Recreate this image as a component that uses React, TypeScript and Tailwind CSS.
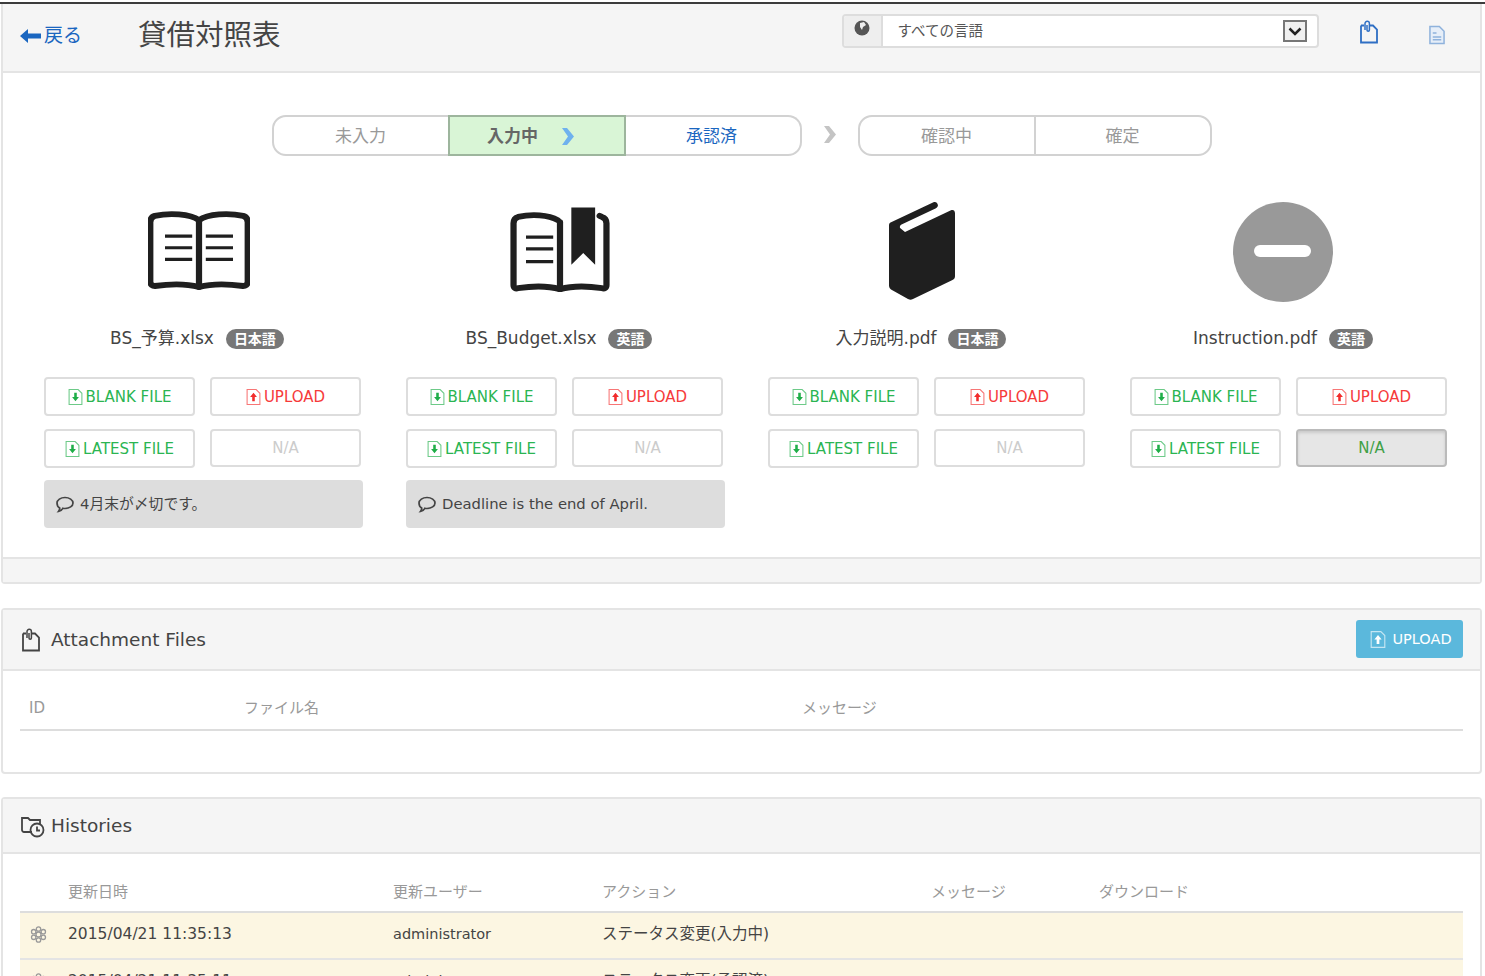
import type { ReactNode } from "react"

const FILES = [
  { name: "BS_予算.xlsx", lang: "日本語", icon: "open", message: "4月末が〆切です。" },
  { name: "BS_Budget.xlsx", lang: "英語", icon: "bookmark", message: "Deadline is the end of April." },
  { name: "入力説明.pdf", lang: "日本語", icon: "closed", message: "" },
  { name: "Instruction.pdf", lang: "英語", icon: "none", message: "", naActive: true },
]

function OpenBook() {
  return (
    <svg className="ml-[4px]" width="102" height="102" viewBox="6 3 90 96" preserveAspectRatio="none" fill="none" stroke="#1f1f1f" strokeWidth="5.500" strokeLinecap="round" strokeLinejoin="round">
      <path d="M51 21c-8-6-26-7-39-4-3 1-4 3-4 6v56c0 3 2 4 4 4 13-2 29-2 39 1 10-3 26-3 39-1 2 0 4-1 4-4V23c0-3-1-5-4-6-13-3-31-2-39 4z" />
      <path d="M51 21v63" />
      <path strokeWidth="3" d="M21 36h24M21 47h24M21 58h24M57 36h24M57 47h24M57 58h24" strokeLinecap="butt" />
    </svg>
  )
}

function BookmarkBook() {
  return (
    <svg className="ml-[2px]" width="102" height="102" viewBox="6 3 90 96" preserveAspectRatio="none" fill="none" stroke="#1f1f1f" strokeWidth="5.500" strokeLinecap="round" strokeLinejoin="round">
      <path d="M49 21c-8-5-23-6-35-3-3 1-4 3-4 6v58c0 3 2 4 4 3 13-2 27-2 37 1 10-3 24-3 37-1 2 1 4 0 4-3V24c0-3-1-5-4-6l-2-1" />
      <path d="M51 23v63" />
      <path strokeWidth="3" strokeLinecap="butt" d="M21 37h24M21 48h24M21 60h24" />
      <path fill="#1f1f1f" stroke="none" d="M61 9h21v54l-10.500-11L61 63z" />
    </svg>
  )
}

function ClosedBook() {
  return (
    <svg width="102" height="102" viewBox="0 0 102 99" preserveAspectRatio="none" fill="#1f1f1f">
      <path d="M20 21L64 1c3-1 6 4 2 6L31 23c-1 1-2 3 0 4l4 3 46-21c2-1 4 0 4 3v61c0 2-1 3-3 4l-39 18c-2 1-3 1-5 0l-17-9c-1-1-2-2-2-4V24c0-1 0-2 1-3z" />
    </svg>
  )
}

function NoneCircle() {
  return (
    <svg width="102" height="102" viewBox="0 0 102 102">
      <circle cx="51" cy="51" r="50" fill="#999999" />
      <rect x="22" y="44" width="57" height="12" rx="6" fill="#ffffff" />
    </svg>
  )
}

function fileIcon(kind: string) {
  if (kind === "open") return <OpenBook />
  if (kind === "bookmark") return <BookmarkBook />
  if (kind === "closed") return <ClosedBook />
  return <NoneCircle />
}

function FileArrow({ up, color, size = 16 }: { up?: boolean; color: string; size?: number }) {
  return (
    <svg width={size - 1} height={size} viewBox="0 0 14 15" fill="none" className="shrink-0">
      <path d="M1 .5h8.500L13 4v10.500H1z" stroke={color} strokeOpacity="0.65" />
      {up ? (
        <path d="M7 3.500l3.200 4H8.200v4H5.800v-4H3.800z" fill={color} />
      ) : (
        <path d="M7 11.500l3.200-4H8.200v-4H5.800v4H3.800z" fill={color} />
      )}
    </svg>
  )
}

function ClipFile({ color, width = 20, height = 24 }: { color: string; width?: number; height?: number }) {
  return (
    <svg width={width} height={height} viewBox="0 0 20 24" fill="none" stroke={color} strokeWidth="1.800">
      <path d="M2 5.500h3M11 5.500h3l4 4v13H2v-17" />
      <path d="M6 10V3.500a2.200 2.200 0 0 1 4.400 0V10a1.200 1.200 0 0 1-2.400 0V5" strokeWidth="1.500" />
    </svg>
  )
}

function FileButton({ children, className = "" }: { children: ReactNode; className?: string }) {
  return (
    <div className={`flex items-center justify-center gap-[3px] rounded-[4px] border-2 text-[15px] ${className}`}>
      {children}
    </div>
  )
}

function Step({ label, className = "", children }: { label: string; className?: string; children?: ReactNode }) {
  return (
    <div className={`flex w-[178px] items-center justify-center border-2 pt-[2px] text-[17px] ${className}`}>
      {label}
      {children}
    </div>
  )
}

function Chevron({ color, className = "" }: { color: string; className?: string }) {
  return (
    <svg width="14" height="17" viewBox="0 0 14 17" className={className}>
      <path d="M1 0h5l7 8.500L6 17H1l6-8.500z" fill={color} />
    </svg>
  )
}

function SectionHead({ icon, title, height, children }: { icon: ReactNode; title: string; height: string; children?: ReactNode }) {
  return (
    <div className={`flex items-center justify-between border-b-2 border-[#e4e4e4] bg-[#f5f5f5] pl-[18px] pr-[17px] ${height}`}>
      <div className="flex items-center text-[18.500px] text-[#444444]">
        <div className="w-[30px]">{icon}</div>
        <span className="pt-[1px]">{title}</span>
      </div>
      {children}
    </div>
  )
}

const HISTORY = [
  { at: "2015/04/21 11:35:13", user: "administrator", action: "ステータス変更(入力中)" },
  { at: "2015/04/21 11:35:11", user: "administrator", action: "ステータス変更(承認済)" },
]

export default function App() {
  return (
    <div
      className="h-[976px] w-[1485px] overflow-hidden bg-white text-[#333333]"
      style={{ fontFamily: '"DejaVu Sans", "Noto Sans CJK JP", sans-serif' }}
    >
      <div className="mt-[2px] h-[2px] bg-[#3c3c3c]" />

      <div className="ml-[1px] w-[1481px] rounded-b-[4px] border-x-2 border-b-2 border-[#e4e4e4]">
        <div className="flex h-[69px] items-center border-b-2 border-[#e4e4e4] bg-[#f5f5f5] pb-[4px]">
          <div className="ml-[17px] flex w-[118px] items-center gap-[3px] text-[19px] text-[#1a66c0]">
            <svg width="21" height="14" viewBox="0 0 21 14">
              <path d="M0 7l8-7v4.500h13v5H8V14z" fill="#1a66c0" />
            </svg>
            戻る
          </div>
          <div className="pt-[1px] text-[28.500px] text-[#444444]">貸借対照表</div>
          <div className="ml-[561px] mt-[10px] flex h-[34px] w-[477px] self-start overflow-hidden rounded-[4px] border-2 border-[#dddddd] bg-white">
            <div className="flex w-[39px] justify-center border-r-2 border-[#dddddd] bg-[#eeeeee] pt-[4px]">
              <svg width="16" height="16" viewBox="0 0 16 16">
                <circle cx="8" cy="8" r="7.500" fill="#555555" />
                <path d="M6 3l4-1 2 3-3 2-1 3-2-3z" fill="#eeeeee" />
              </svg>
            </div>
            <div className="flex flex-1 items-center justify-between pl-[15px] pr-[10px] text-[14.500px] text-[#555555]">
              <span className="pt-[1px]">すべての言語</span>
              <div className="flex h-[22px] w-[24px] items-center justify-center border-2 border-[#777777] bg-[#f0f0f0]">
                <svg width="14" height="9" viewBox="0 0 14 9" fill="none" stroke="#222222" strokeWidth="2.500">
                  <path d="M1.500 1.500L7 7l5.500-5.500" />
                </svg>
              </div>
            </div>
          </div>
          <div className="-mt-[8px] ml-[40px]">
            <ClipFile color="#2f6fc4" />
          </div>
          <div className="-mt-[2px] ml-[50px]">
            <svg width="16" height="20" viewBox="0 0 17 20" fill="#e6eef8" stroke="#8fb2dc" strokeWidth="1.600">
              <path d="M1 1h10l5 5v13H1z" />
              <path d="M4 8h4M4 12h9M4 15h9" />
            </svg>
          </div>
        </div>

        <div className="h-[484px] pl-[41px] pt-[42px]">
          <div className="flex h-[41px] items-stretch justify-center pr-[41px]">
            <div className="flex">
              <Step label="未入力" className="rounded-l-[14px] border-[#d2d2d2] text-[#999999]" />
              <Step label="入力中" className="relative -mx-[2px] border-[#9db59d] bg-[#d9f5d6] pr-[48px] font-semibold text-[#666666]">
                <Chevron color="#6fb1ee" className="absolute left-[111px] top-[11px]" />
              </Step>
              <Step label="承認済" className="rounded-r-[14px] border-l-0 border-[#d2d2d2] text-[#1a66c0]" />
            </div>
            <div className="flex w-[56px] items-center justify-center pb-[2px]">
              <Chevron color="#c4c4c4" />
            </div>
            <div className="flex">
              <Step label="確認中" className="rounded-l-[14px] border-[#d2d2d2] text-[#999999]" />
              <Step label="確定" className="-ml-[2px] rounded-r-[14px] border-[#d2d2d2] text-[#999999]" />
            </div>
          </div>

          <div className="mt-[45px] grid grid-cols-[repeat(4,318px)] gap-x-[44px]">
            {FILES.map(f => (
              <div key={f.name}>
                <div className="flex h-[102px] justify-center pr-[12px]">{fileIcon(f.icon)}</div>
                <div className="mt-[25px] flex h-[22px] items-center justify-center gap-[12px] pr-[12px] text-[17px] text-[#444444]">
                  {f.name}
                  <span className="rounded-full bg-[#777777] px-[8px] py-[2px] text-[14px] font-bold leading-[16px] text-white">{f.lang}</span>
                </div>
                <div className="mt-[27px] grid grid-cols-2 gap-x-[15px] gap-y-[13px] pr-[1px]">
                  <FileButton className="h-[39px] border-[#dddddd] bg-white pt-[1px] text-[#2bb552]">
                    <FileArrow color="#1fae48" />
                    BLANK FILE
                  </FileButton>
                  <FileButton className="h-[39px] border-[#dddddd] bg-white pt-[1px] text-[#f63a3a]">
                    <FileArrow up color="#f22c2c" />
                    UPLOAD
                  </FileButton>
                  <FileButton className="h-[39px] border-[#dddddd] bg-white pt-[1px] text-[#2bb552]">
                    <FileArrow color="#1fae48" />
                    LATEST FILE
                  </FileButton>
                  {f.naActive ? (
                    <FileButton className="h-[38px] border-[#bbbbbb] bg-[#e6e6e6] text-[#3fa046] shadow-[inset_0_2px_3px_rgba(0,0,0,0.12)]">N/A</FileButton>
                  ) : (
                    <FileButton className="h-[38px] border-[#dddddd] bg-white text-[#cccccc]">N/A</FileButton>
                  )}
                </div>
                {f.message && (
                  <div className="mt-[12px] flex h-[48px] w-[319px] items-center gap-[6px] rounded-[4px] bg-[#dddddd] pl-[12px] text-[14.800px] text-[#444444]">
                    <svg width="18" height="17" viewBox="0 0 18 17" fill="none" stroke="#444444" strokeWidth="1.700">
                      <path d="M9 1.500c4.400 0 8 2.400 8 5.500s-3.600 5.500-8 5.500c-.8 0-1.500-.1-2.200-.2C5.800 14.200 4 15.300 2.500 15.500c.8-1 1.300-2.200 1.200-3.500C2 11 1 9.100 1 7c0-3.100 3.600-5.500 8-5.500z" />
                    </svg>
                    {f.message}
                  </div>
                )}
              </div>
            ))}
          </div>
        </div>

        <div className="h-[25px] border-t-2 border-[#e4e4e4] bg-[#f5f5f5]" />
      </div>

      <div className="ml-[1px] mt-[24px] h-[166px] w-[1481px] rounded-[4px] border-2 border-[#e4e4e4]">
        <SectionHead icon={<ClipFile color="#444444" />} title="Attachment Files" height="h-[61px]">
          <div className="mb-[2px] flex h-[38px] w-[107px] items-center justify-center gap-[6px] rounded-[3px] bg-[#5bb8dc] pl-[3px] pt-[2px] text-[14.500px] text-white">
            <FileArrow up color="#ffffff" size={17} />
            UPLOAD
          </div>
        </SectionHead>
        <div className="px-[17px]">
          <div className="grid h-[60px] grid-cols-[215px_558px_1fr] items-center border-b-2 border-[#dddddd] pl-[9px] pt-[16px] text-[15px] text-[#999999]">
            <div>ID</div>
            <div>ファイル名</div>
            <div>メッセージ</div>
          </div>
        </div>
      </div>

      <div className="ml-[1px] mt-[23px] w-[1481px] rounded-t-[4px] border-x-2 border-t-2 border-[#e4e4e4]">
        <SectionHead
          icon={
            <svg width="24" height="24" viewBox="0 0 24 24" fill="none" stroke="#444444" strokeWidth="1.800">
              <path d="M11 18H3a2 2 0 0 1-2-2V4h6l2 2h10v5" />
              <circle cx="16" cy="16" r="6.500" />
              <path d="M16 12.500V16.500h3" />
            </svg>
          }
          title="Histories"
          height="h-[55px]"
        />
        <div className="px-[17px]">
          <div className="grid h-[59px] grid-cols-[48px_325px_209px_329px_168px_1fr] items-center border-b-2 border-[#dddddd] pt-[20px] text-[15px] text-[#999999]">
            <div />
            <div>更新日時</div>
            <div>更新ユーザー</div>
            <div>アクション</div>
            <div>メッセージ</div>
            <div>ダウンロード</div>
          </div>
          {HISTORY.map(h => (
            <div key={h.at} className="grid h-[47px] grid-cols-[48px_325px_209px_329px_168px_1fr] items-center border-b-2 border-[#e4e4e4] bg-[#fcf6e2] pb-[2px] text-[14.500px] text-[#444444]">
              <div className="pl-[10px]">
                <svg width="17" height="17" viewBox="0 0 17 17" fill="none" stroke="#999999" strokeWidth="1.300">
                  <circle cx="8.500" cy="8.500" r="2.500" />
                  <circle cx="8.500" cy="3" r="2.200" />
                  <circle cx="8.500" cy="14" r="2.200" />
                  <circle cx="3.700" cy="5.700" r="2.200" />
                  <circle cx="13.300" cy="5.700" r="2.200" />
                  <circle cx="3.700" cy="11.300" r="2.200" />
                  <circle cx="13.300" cy="11.300" r="2.200" />
                </svg>
              </div>
              <div className="text-[15.500px]">{h.at}</div>
              <div>{h.user}</div>
              <div className="text-[15.500px]">{h.action}</div>
              <div />
              <div />
            </div>
          ))}
        </div>
      </div>
    </div>
  )
}
